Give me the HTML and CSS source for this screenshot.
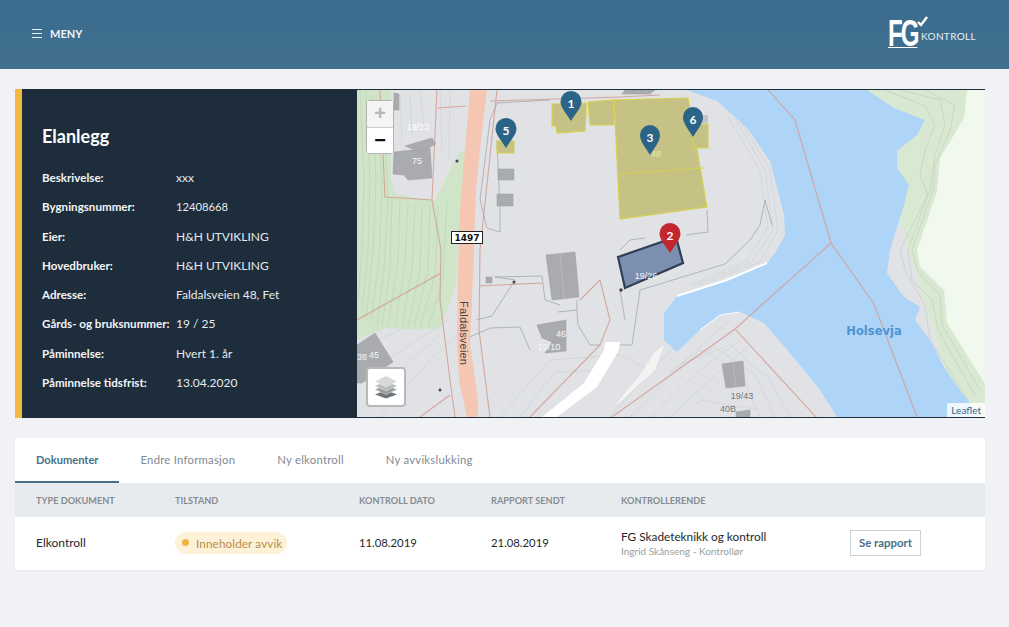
FILE: index.html
```html
<!DOCTYPE html>
<html lang="no">
<head>
<meta charset="utf-8">
<title>Elanlegg</title>
<link rel="stylesheet" href="styles.css">
</head>
<body>
<header class="topbar">
  <div class="menu">
    <svg class="burger" width="10" height="9" viewBox="0 0 10 9"><path d="M0 .5h10M0 4.500h10M0 8.500h10" stroke="#e6eef3" stroke-width="1"/></svg>
    <span>MENY</span>
  </div>
  <div class="logo">
    <svg class="logo-check" width="11" height="11" viewBox="0 0 11 11"><path d="M1 6l3 3 6-8" fill="none" stroke="#fff" stroke-width="2.4"/></svg>
    <span class="logo-fg">FG</span><span class="logo-text">KONTROLL</span>
  </div>
</header>
<main class="page">
  <section class="hero">
    <div class="info">
      <h1>Elanlegg</h1>
      <dl class="facts">
        <dt>Beskrivelse:</dt><dd>xxx</dd>
        <dt>Bygningsnummer:</dt><dd class="num">12408668</dd>
        <dt>Eier:</dt><dd>H&amp;H UTVIKLING</dd>
        <dt>Hovedbruker:</dt><dd>H&amp;H UTVIKLING</dd>
        <dt>Adresse:</dt><dd>Faldalsveien 48, Fet</dd>
        <dt>Gårds- og bruksnummer:</dt><dd>19 / 25</dd>
        <dt>Påminnelse:</dt><dd>Hvert 1. år</dd>
        <dt>Påminnelse tidsfrist:</dt><dd>13.04.2020</dd>
      </dl>
    </div>
    <div class="map">
      <svg class="map-svg" viewBox="357 90 628 327" preserveAspectRatio="none">
        <rect x="357" y="90" width="628" height="327" fill="#e0e2e6"/>
        <!-- far shore -->
        <path d="M860 90H985V417H960Z" fill="#f1f9ee"/>
        <path d="M860 90H967L964 118L940 158L937 191L917 250L920 267L944 290L947 323L985 384V417H960Z" fill="#d9e8d0"/>
        <g fill="none" stroke="#c2d0be" stroke-width=".7">
          <path d="M885 90L925 106L935 125L925 150L920 175L928 195L908 250L912 280L932 300L938 330L975 395"/>
          <path d="M900 90L940 100L945 125L935 155L930 190L900 250L905 270L925 305L930 340L968 400"/>
          <path d="M925 90L955 105L950 130L935 165L933 190L912 250L918 272L940 295L942 325L980 390"/>
        </g>
        <!-- water -->
        <path d="M687 90L717 101L747 128L770 161L784 215L785 235L777 250L767 263L727 280L677 296L664 313L664 340L677 352L700 330L720 315L740 312L764 323L790 353L820 390L837 417H977L970 403L960 390L944 367L930 340L915 320L920 307L904 297L887 273L890 250L904 205L909 185L897 168L897 151L917 135L925 120L894 108L867 90Z" fill="#aed5f8"/>
        <path d="M677 296L727 280L767 263" fill="none" stroke="#fff" stroke-width="2"/>
        <path d="M700 330L720 315L740 312" fill="none" stroke="#fff" stroke-width="1"/>
        <!-- west green -->
        <path d="M357 90H391V180L395 194L433 200V160L466 150L458 250L456 285L440 328L420 330L385 328L357 340Z" fill="#d0e4c8"/>
        <path d="M391 90H466L460 150L435 200L395 194Z" fill="#e0e2e6"/>
        <g fill="none" stroke="#bcd2b3" stroke-width=".6">
          <path d="M360 90L364 180L362 250L358 300"/>
          <path d="M366 90L370 180L368 250L362 310"/>
          <path d="M372 95L376 180L373 250L366 318"/>
          <path d="M378 110L382 190L379 260L371 322"/>
          <path d="M385 130L388 200L384 270L377 325"/>
          <path d="M392 198L390 270L382 326"/>
          <path d="M400 200L398 260L388 326"/>
          <path d="M408 202L405 265L395 326"/>
          <path d="M415 205L412 270L402 326"/>
          <path d="M422 205L420 270L408 327"/>
          <path d="M430 205L428 270L414 327"/>
          <path d="M438 205L435 275L420 328"/>
          <path d="M447 200L443 280L428 328"/>
        </g>
        <g fill="none" stroke="#cfd1d6" stroke-width=".7">
          <path d="M357 350L400 330L440 300M357 380L410 345L448 320M380 417L430 360L456 335M357 412L405 365L440 335"/>
          <path d="M400 95L402 140M420 90L424 130M440 90L442 150M450 90L449 160M410 92L412 135"/>
          <path d="M740 120L770 170L778 230L760 262L700 285M727 115L760 170L768 228L745 262L690 285M735 118L765 170L773 230L752 262L695 285"/>
          <path d="M760 417L740 370L700 350L670 372M790 417L770 380L730 345L680 365M775 417L755 375L715 347L675 368"/>
          <path d="M610 417L680 340L720 300M650 417L700 370L740 340M630 417L690 355L730 320M670 417L710 380L750 345"/>
          <path d="M500 417L550 360L620 355L660 375M520 417L555 372L610 370"/>
          <path d="M700 400L760 410M690 410L720 380"/>
        </g>
        <!-- white road -->
        <path d="M605 342H620L618 352L597 387L557 417H542L584 383L604 350Z" fill="#fff"/>
        <path d="M664 345L655 370L620 402L615 405L640 375L655 352Z" fill="#f3f4f2"/>
        <!-- main road -->
        <path d="M470 90H487L482 130L476 190L474 250L472 300L470 345L478 400L478 417H467L459 380L457 340L458 270L460 210Z" fill="#f5c7b3"/>
        <!-- property lines -->
        <g fill="none" stroke="#d49d91" stroke-width="1.1" opacity=".85">
          <path d="M437 90L432 200L385 197L380 90"/>
          <path d="M438 108L466 106M432 200L441 250L440 300L450 380L455 417"/>
          <path d="M357 320L441 273"/>
          <path d="M497 90L480 250L479 330L490 417"/>
          <path d="M480 286L543 283"/>
          <path d="M490 101L620 97L660 95"/>
          <path d="M580 300L600 280L610 320L600 345L530 417"/>
          <path d="M768 90L795 120L831 243L874 304L917 417"/>
          <path d="M831 243L735 329L612 417M735 329L816 417"/>
          <path d="M420 417L450 395"/>
        </g>
        <!-- paths -->
        <g fill="none" stroke="#a3a7ad" stroke-width=".8">
          <path d="M497 103L490 120L480 200L487 228L500 232L500 210L497 140"/>
          <path d="M497 103L550 100"/>
          <path d="M476 320L492 316L515 280L495 277"/>
          <path d="M495 277L542 276L545 300L560 305"/>
          <path d="M558 312L577 310L577 300M577 310L578 325L590 345L600 345"/>
          <path d="M470 337L490 328L520 327L530 350"/>
          <path d="M620 290L625 320M640 290L632 345L620 345"/>
          <path d="M640 290L725 264L750 240L760 225L765 200L772 225"/>
          <path d="M686 235L708 232L707 210"/>
          <path d="M620 250L630 240L645 238"/>
        </g>
        <!-- buildings -->
        <g fill="#a9abaf" stroke="#9a9ca1" stroke-width=".5">
          <path d="M394 152L430 148L432 178L408 180L404 175L393 174Z"/>
          <path d="M405 146L432 138L436 144L420 152Z"/>
          <path d="M399 94L394 93V110H399Z"/>
          <path d="M498 169H514V180H498Z"/>
          <path d="M497 194H513V206H497Z"/>
          <path d="M546 255L575 252L579 297L552 300Z"/>
          <path d="M537 325L566 320L566 340L552 342L542 338Z"/>
          <path d="M552 342L566 340H566V351L545 353Z"/>
          <path d="M357 345L375 333L393 362L362 383H357Z"/>
          <path d="M722 364L743 361L745 386L726 388Z"/>
          <path d="M736 412L750 410V417H736Z"/>
          <path d="M625 90H655L650 94H622Z"/>
          <path d="M486 277H492V283H486Z"/>
        </g>
        <path d="M560 254L564 299M733 363L736 387" stroke="#bcbec2" stroke-width=".8"/>
        <!-- yellow plots -->
        <g fill="#c6c286" stroke="#d6d24e" stroke-width="1.2">
          <path d="M614 100L688 98L707 207L620 219Z"/>
          <path d="M552 104L586 103V115L585 131L557 133L556 126L552 126Z"/>
          <path d="M588 102L614 100V125L590 125Z"/>
          <path d="M497 141H514V153H497Z"/>
          <path d="M693 124L708 124V148L693 148Z"/>
        </g>
        <path d="M617 174L704 168" stroke="#d6d24e" stroke-width="1"/>
        <path d="M701 115H708V123H701Z" fill="#c1c3c8"/>
        <path d="M618 257L676 237L683 263L625 288Z" fill="#7d8fb0" stroke="#2f4056" stroke-width="2.2"/>
        <!-- map labels -->
        <g class="map-label">
          <text x="418" y="130">19/23</text>
          <text x="417" y="164" class="l-white">75</text>
          <text x="656" y="157" class="l-yellow">48</text>
          <text x="646" y="279" class="l-white">19/26</text>
          <text x="362" y="360" class="l-white">38</text>
          <text x="374" y="358" class="l-white">45</text>
          <text x="561" y="337" class="l-white">46</text>
          <text x="549" y="350" class="l-white">19/10</text>
          <text x="742" y="399" class="l-dark">19/43</text>
          <text x="728" y="412" class="l-dark">40B</text>
        </g>
        <rect x="451.500" y="231.500" width="31" height="12" fill="#fff" stroke="#222" stroke-width="1"/>
        <text x="467" y="241" class="road-no">1497</text>
        <text class="road-name" transform="translate(460 301) rotate(90)">Faldalsveien</text>
        <text x="874" y="335" class="lake">Holsevja</text>
        <!-- dots -->
        <g fill="#445">
          <circle cx="457" cy="161" r="1.500"/><circle cx="514" cy="282" r="1.500"/><circle cx="621" cy="290" r="1.800"/><circle cx="440" cy="390" r="1.500"/>
        </g>
        <!-- markers -->
        <g class="pin"><path d="M571 91a10.500 10.500 0 0 1 10.500 10.500C581.500 108 575 114 571 121C567 114 560.500 108 560.500 101.500A10.500 10.500 0 0 1 571 91Z" fill="#2c6488"/><text x="571" y="108">1</text></g>
        <g class="pin"><path d="M506 118a10.500 10.500 0 0 1 10.500 10.500C516.500 135 510 141 506 148C502 141 495.500 135 495.500 128.500A10.500 10.500 0 0 1 506 118Z" fill="#2c6488"/><text x="506" y="135">5</text></g>
        <g class="pin"><path d="M650 125a10 10 0 0 1 10 10C660 142 654 148 650 155C646 148 640 142 640 135A10 10 0 0 1 650 125Z" fill="#2c6488"/><text x="650" y="142">3</text></g>
        <g class="pin"><path d="M693 107a10 10 0 0 1 10 10C703 124 697 130 693 137C689 130 683 124 683 117A10 10 0 0 1 693 107Z" fill="#2c6488"/><text x="693" y="124">6</text></g>
        <g class="pin"><path d="M670 223a10.500 10.500 0 0 1 10.500 10.500C680.500 240 674 246 670 253C666 246 659.500 240 659.500 233.500A10.500 10.500 0 0 1 670 223Z" fill="#c2262e"/><text x="670" y="240">2</text></g>
      </svg>
      <div class="zoom-ctl">
        <span class="zoom-btn zoom-in">+</span>
        <span class="zoom-btn">−</span>
      </div>
      <div class="layers">
        <svg width="24" height="24" viewBox="0 0 24 24">
          <path d="M12 15l11 4.500L12 23.500 1 19.500Z" fill="#6f7478"/>
          <path d="M12 10l11 4.500L12 19.500 1 14.500Z" fill="#95999c" stroke="#e6e6e6" stroke-width=".5"/>
          <path d="M12 6l11 5L12 16 1 11Z" fill="#b9bcbe" stroke="#e6e6e6" stroke-width=".5"/>
          <path d="M12 1l11 5.500L12 12 1 6.500Z" fill="#d7d8da" stroke="#eee" stroke-width=".5"/>
        </svg>
      </div>
      <div class="attribution">Leaflet</div>
    </div>
  </section>

  <section class="card">
    <nav class="tabs">
      <span class="tab active">Dokumenter</span>
      <span class="tab">Endre Informasjon</span>
      <span class="tab">Ny elkontroll</span>
      <span class="tab">Ny avvikslukking</span>
    </nav>
    <div class="grid head">
      <span>TYPE DOKUMENT</span>
      <span>TILSTAND</span>
      <span>KONTROLL DATO</span>
      <span>RAPPORT SENDT</span>
      <span>KONTROLLERENDE</span>
      <span></span>
    </div>
    <div class="grid row">
      <span>Elkontroll</span>
      <span><span class="badge"><i class="dot"></i>Inneholder avvik</span></span>
      <span class="date">11.08.2019</span>
      <span class="date">21.08.2019</span>
      <span class="who"><span>FG Skadeteknikk og kontroll</span><small>Ingrid Skånseng - Kontrollør</small></span>
      <span><span class="btn">Se rapport</span></span>
    </div>
  </section>
</main>
</body>
</html>
```
FILE: styles.css
```css
* { box-sizing: border-box; }
html, body { margin: 0; height: 100%; }
body {
  background: #f1f2f6;
  font-family: "Lato", "Noto Sans", sans-serif;
  font-size: 12px;
  color: #24282c;
  overflow: hidden;
}
.topbar {
  height: 69px;
  background: linear-gradient(180deg, #3b6c8e, #41708f);
  display: flex;
  align-items: center;
  justify-content: space-between;
  padding: 0 33px 2px 32px;
  color: #fff;
}
.menu { display: flex; align-items: center; gap: 8px; font-weight: 700; font-size: 11px; color: #eef5f8; }
.burger { display: block; }
.logo { position: relative; display: flex; align-items: flex-end; height: 30px; color: #fff; }
.logo-check { position: absolute; left: 29px; top: -3px; }
.logo-fg {
  font-family: "Liberation Sans", sans-serif;
  font-weight: 700;
  font-size: 36px;
  line-height: 27px;
  letter-spacing: -3px;
  width: 44px;
  height: 28px;
  margin: 0 -11px 1px 0;
  border-bottom: 1px solid #fff;
  display: block;
  transform: scaleX(.67);
  transform-origin: left bottom;
}
.logo-text { font-size: 10px; letter-spacing: .35px; color: #e8f0f4; line-height: 14px; margin-bottom: 6px; }

.page { padding: 20px 24px 0 15px; }
.hero {
  display: flex;
  height: 329px;
  background: #1e2d3b;
  border-left: 7px solid #f3b83f;
}
.info { width: 335px; flex: none; padding: 36px 0 0 20px; color: #f2f5f7; }
.info h1 { margin: 0 0 15px; font-size: 18px; font-weight: 700; line-height: 23px; color: #fff; }
.facts {
  margin: 0;
  display: grid;
  grid-template-columns: 134px 1fr;
  grid-auto-rows: 29.25px;
  align-items: center;
  font-size: 12px;
}
.facts dt { font-weight: 700; white-space: nowrap; font-size: 11.6px; }
.facts dd { margin: 0; color: #e6eaed; white-space: nowrap; }
.facts .num { font-size: 11.2px; }

.map { position: relative; flex: 1; overflow: hidden; padding: 1px 0; }
.map-svg { display: block; width: 100%; height: 100%; }
.map-label { font-family: "Liberation Sans", sans-serif; font-size: 9px; fill: #fff; text-anchor: middle; }
.l-white { fill: #f6f6f6; }
.l-yellow { fill: #e9e6a8; }
.l-dark { fill: #74777c; }
.road-no { font-family: "DejaVu Sans", sans-serif; font-weight: 700; font-size: 9px; fill: #111; text-anchor: middle; }
.road-name { font-family: "Liberation Sans", sans-serif; font-size: 11px; fill: #454545; letter-spacing: .2px; }
.lake { font-family: "DejaVu Sans", sans-serif; font-weight: 700; font-size: 11.5px; fill: #4d93d1; text-anchor: middle; }
.pin text { font-family: "Lato", sans-serif; font-size: 12px; font-weight: 700; fill: #fff; text-anchor: middle; }

.zoom-ctl {
  position: absolute; left: 9px; top: 11px;
  width: 28px; height: 54px;
  border: 1px solid #b3b3b3;
  border-radius: 3px;
  background: #fff;
  display: flex; flex-direction: column;
}
.zoom-btn {
  flex: 1;
  display: flex; align-items: center; justify-content: center;
  font: 700 20px "Liberation Sans", sans-serif;
  color: #111;
  background: #fff;
}
.zoom-in { color: #b5b7ba; background: #f4f4f4; border-bottom: 1px solid #ccc; }
.layers {
  position: absolute; left: 9px; top: 278px;
  width: 40px; height: 40px;
  background: #fff;
  border: 2px solid #b8b9bb;
  border-radius: 4px;
  display: flex; align-items: center; justify-content: center;
}
.attribution {
  position: absolute; right: 0; bottom: 1px;
  height: 14px; padding: 0 4px;
  background: rgba(255,255,255,.8);
  font-size: 10px; line-height: 14px;
  color: #2f6a91;
}

.card {
  margin-top: 20px;
  background: #fff;
  border-radius: 2px;
  box-shadow: 0 1px 2px rgba(0,0,0,.06);
}
.tabs { display: flex; height: 45px; }
.tab {
  padding: 0 21px;
  line-height: 43px;
  font-size: 11.3px;
  letter-spacing: .25px;
  color: #7f8a92;
}
.tab.active { color: #48708a; font-weight: 700; border-bottom: 2px solid #4a7186; font-size: 11.1px; letter-spacing: 0; }
.grid {
  display: grid;
  grid-template-columns: 139px 184px 132px 130px 229px 1fr;
  padding-left: 21px;
  align-items: center;
}
.head {
  height: 34px;
  background: #e8ebee;
  font-size: 9.2px;
  font-weight: 700;
  color: #868b8f;
}
.row { height: 53px; font-size: 12px; padding-bottom: 2px; }
.date { font-size: 11.3px; }
.badge {
  display: inline-flex; align-items: center; gap: 7px;
  height: 22px; padding: 0 5px 0 7px;
  border-radius: 11px;
  background: #fdf1d8;
  color: #b88d48;
  font-size: 11.7px;
  letter-spacing: .12px;
}
.dot { width: 7px; height: 7px; border-radius: 50%; background: #f1b43f; }
.who { display: flex; flex-direction: column; gap: 1px; font-size: 11.8px; }
.who small { font-size: 10px; color: #9a9ea2; }
.btn {
  display: inline-block;
  width: 71px; height: 26px;
  line-height: 24px;
  text-align: center;
  border: 1px solid #ccd3d8;
  color: #48708a;
  font-weight: 700;
  font-size: 11.4px;
  background: #fff;
}
```
